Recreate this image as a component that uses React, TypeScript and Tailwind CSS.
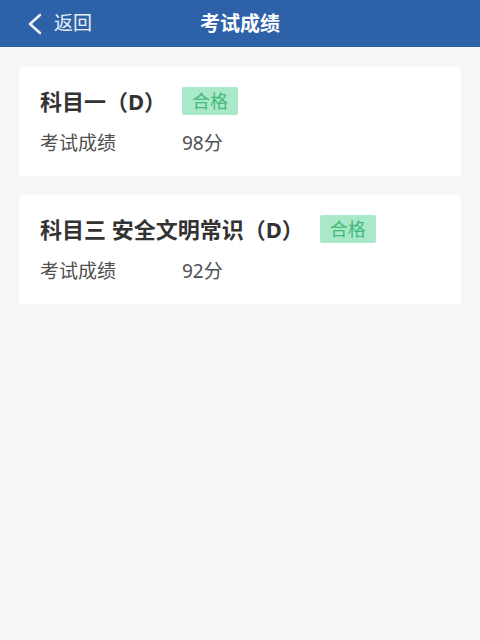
const results = [
  { name: "科目一（D）", passed: true, score: 98 },
  { name: "科目三 安全文明常识（D）", passed: true, score: 92 },
]

const ScoreCard = ({ name, passed, score }: { name: string; passed: boolean; score: number }) => {
  return (
    <div className="bg-white rounded-[3px] pl-[21px] pr-4 pt-[20px] pb-[21px]">
      <div className="flex items-center h-[28px]">
        <span className="text-[22px] font-bold text-[#333333] leading-none">{name}</span>
        {passed && (
          <span className="ml-[16px] h-[28px] px-[10px] flex items-center bg-[#a9e8c8] text-[#45b87a] text-[18px] leading-none rounded-[2px]">
            合格
          </span>
        )}
      </div>
      <div className="flex items-center mt-[16px] h-[24px] text-[19px] text-[#505050]">
        <span className="w-[142px]">考试成绩</span>
        <span>{score}分</span>
      </div>
    </div>
  )
}

const App = () => {
  return (
    <div
      className="w-[480px] h-[640px] bg-[#f5f6f7] flex flex-col"
      style={{ fontFamily: '"Noto Sans", "Noto Sans CJK SC", sans-serif' }}
    >
      <header className="relative h-[47px] bg-[#2d62a9] flex items-center shrink-0">
        <div className="flex items-center pl-[27px] text-white/90">
          <svg width="16" height="22" viewBox="0 0 16 22" fill="none">
            <path d="M13 2 L3 11 L13 20" stroke="currentColor" strokeWidth="2.6" strokeLinecap="round" strokeLinejoin="round" />
          </svg>
          <span className="ml-[11px] text-[19px] leading-none">返回</span>
        </div>
        <h1 className="absolute left-1/2 -translate-x-1/2 text-white text-[20px] font-semibold leading-none">
          考试成绩
        </h1>
      </header>
      <main className="flex flex-col gap-[19px] px-[19px] pt-[20px]">
        {results.map((r) => (
          <ScoreCard key={r.name} {...r} />
        ))}
      </main>
    </div>
  )
}

export default App
